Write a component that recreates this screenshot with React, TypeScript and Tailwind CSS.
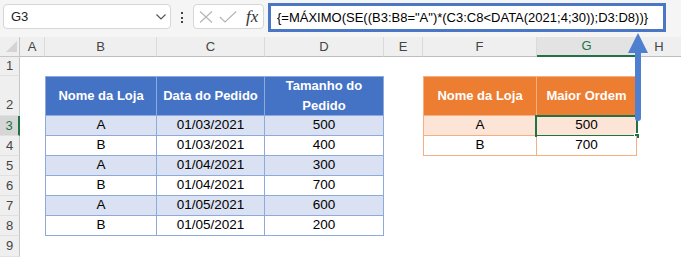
import React from "react";

const W = [20, 25, 112, 108, 119, 39, 114, 100, 44];
const colW = [
  "w-[20px]",
  "w-[25px]",
  "w-[112px]",
  "w-[108px]",
  "w-[119px]",
  "w-[39px]",
  "w-[114px]",
  "w-[100px]",
  "w-[44px]",
];
void W;

const letters = ["", "A", "B", "C", "D", "E", "F", "G", "H"];

const body = [
  { n: "3", b: "A", c: "01/03/2021", d: "500", f: "A", g: "500", shade: true },
  { n: "4", b: "B", c: "01/03/2021", d: "400", f: "B", g: "700", shade: false },
  { n: "5", b: "A", c: "01/04/2021", d: "300", shade: true },
  { n: "6", b: "B", c: "01/04/2021", d: "700", shade: false },
  { n: "7", b: "A", c: "01/05/2021", d: "600", shade: true },
  { n: "8", b: "B", c: "01/05/2021", d: "200", shade: false },
];

function RowHead({ n, sel, tall }: { n: string; sel?: boolean; tall?: boolean }) {
  return (
    <div
      className={`${colW[0]} shrink-0 flex justify-center ${tall ? "items-end pb-[1px]" : "items-center"} border-b border-[#e1e1e1] text-[13px] ${
        sel
          ? "bg-[#d6d6d6] text-[#217346] border-r-2 border-r-[#217346]"
          : "bg-[#efefef] text-[#444] border-r border-r-[#c6c6c6]"
      }`}
    >
      {n}
    </div>
  );
}

export default function App() {
  return (
    <div
      className="relative w-[681px] h-[257px] overflow-hidden bg-white text-black"
      style={{ fontFamily: '"Liberation Sans", Arial, sans-serif' }}
    >
      {/* Toolbar */}
      <div className="h-[37px] bg-[#f5f5f5] flex items-start pt-[3px]">
        <div className="ml-[3px] mt-[1px] w-[168px] h-[25px] bg-white border border-[#d6d6d6] rounded-[4px] flex items-center justify-between pl-[7px] pr-[3px] text-[13px] text-[#222]">
          <span>G3</span>
          <svg width="12" height="8" viewBox="0 0 12 8">
            <path d="M1.5 1.5 L6 6 L10.5 1.5" fill="none" stroke="#555" strokeWidth="1.2" />
          </svg>
        </div>
        <div className="w-[22px] h-[29px] flex flex-col items-center justify-center gap-[2.5px]">
          <span className="w-[2px] h-[2px] bg-[#444]" />
          <span className="w-[2px] h-[2px] bg-[#444]" />
          <span className="w-[2px] h-[2px] bg-[#444]" />
        </div>
        <div className="mt-[1px] w-[71px] h-[25px] bg-white border border-[#d6d6d6] rounded-[4px] flex items-center pl-[5px] gap-[6px]">
          <svg width="14" height="12" viewBox="0 0 14 12">
            <path d="M1 0.5 L13 11.5 M13 0.5 L1 11.5" stroke="#b4b4b4" strokeWidth="1.1" fill="none" />
          </svg>
          <svg width="18" height="12" viewBox="0 0 18 12">
            <path d="M0.8 6 L6 11 L17.2 0.5" stroke="#b4b4b4" strokeWidth="1.1" fill="none" />
          </svg>
          <span
            className="ml-[3px] text-[17px] italic text-[#333] leading-none"
            style={{ fontFamily: '"Liberation Serif", "Times New Roman", serif' }}
          >
            fx
          </span>
        </div>
        <div className="ml-[4px] w-[398px] h-[29px] bg-white border-[3px] border-[#4a76c6] flex items-center pl-[6px] text-[13px] text-black whitespace-nowrap">
          {'{=MÁXIMO(SE((B3:B8="A")*(C3:C8<DATA(2021;4;30));D3:D8))}'}
        </div>
      </div>

      {/* Column header row */}
      <div className="flex h-[20px]">
        <div className={`${colW[0]} shrink-0 bg-[#efefef] border-r border-b border-[#c6c6c6] relative`}>
          <svg className="absolute left-[6px] top-[4px]" width="11" height="11" viewBox="0 0 11 11">
            <path d="M11 0 L11 11 L0 11 Z" fill="#d4d4d4" />
          </svg>
        </div>
        {letters.slice(1).map((l, i) => {
          const sel = l === "G";
          return (
            <div
              key={l}
              className={`${colW[i + 1]} shrink-0 flex items-center justify-center text-[13px] border-r border-[#dadada] ${
                sel
                  ? "bg-[#e3e3e3] text-[#217346] border-b-2 border-b-[#217346]"
                  : "bg-[#efefef] text-[#444] border-b border-b-[#bdbdbd]"
              } ${l === "H" ? "border-r-0" : ""}`}
            >
              {l}
            </div>
          );
        })}
      </div>

      {/* Row 1 */}
      <div className="flex h-[19px]">
        <RowHead n="1" />
      </div>

      {/* Row 2 - headers */}
      <div className="flex h-[40px]">
        <RowHead n="2" tall />
        <div className={`${colW[1]} shrink-0`} />
        <div className={`${colW[2]} shrink-0 bg-[#4472c4] border border-[#8eaadb] flex items-center justify-center text-white font-bold text-[13px]`}>
          Nome da Loja
        </div>
        <div className={`${colW[3]} shrink-0 bg-[#4472c4] border-y border-r border-[#8eaadb] flex items-center justify-center text-white font-bold text-[13px]`}>
          Data do Pedido
        </div>
        <div className={`${colW[4]} shrink-0 bg-[#4472c4] border-y border-r border-[#8eaadb] flex items-center justify-center text-center text-white font-bold text-[13px] leading-[20px]`}>
          Tamanho do
          <br />
          Pedido
        </div>
        <div className={`${colW[5]} shrink-0`} />
        <div className={`${colW[6]} shrink-0 bg-[#ed7d31] border border-[#f4b084] flex items-center justify-center text-white font-bold text-[13px]`}>
          Nome da Loja
        </div>
        <div className={`${colW[7]} shrink-0 bg-[#ed7d31] border-y border-r border-[#f4b084] flex items-center justify-center text-white font-bold text-[13px]`}>
          Maior Ordem
        </div>
      </div>

      {/* Body rows */}
      {body.map((r) => {
        const blueBg = r.shade ? "bg-[#d9e1f2]" : "bg-white";
        const orBg = r.shade ? "bg-[#fce4d6]" : "bg-white";
        return (
          <div key={r.n} className="flex h-[20px]">
            <RowHead n={r.n} sel={r.n === "3"} />
            <div className={`${colW[1]} shrink-0`} />
            <div className={`${colW[2]} shrink-0 ${blueBg} border-l border-r border-b border-[#8eaadb] flex items-center justify-center text-[13.5px]`}>
              {r.b}
            </div>
            <div className={`${colW[3]} shrink-0 ${blueBg} border-r border-b border-[#8eaadb] flex items-center justify-center text-[13.5px]`}>
              {r.c}
            </div>
            <div className={`${colW[4]} shrink-0 ${blueBg} border-r border-b border-[#8eaadb] flex items-center justify-center text-[13.5px]`}>
              {r.d}
            </div>
            <div className={`${colW[5]} shrink-0`} />
            {r.f ? (
              <>
                <div className={`${colW[6]} shrink-0 ${orBg} border-l border-r border-b border-[#f4b084] flex items-center justify-center text-[13.5px]`}>
                  {r.f}
                </div>
                <div className={`${colW[7]} shrink-0 ${orBg} border-r border-b border-[#f4b084] flex items-center justify-center text-[13.5px] relative`}>
                  {r.g}
                  {r.n === "3" && (
                    <>
                      <div className="absolute left-[-2px] top-[-1px] right-[-2px] bottom-[-2px] border-2 border-[#217346]" />
                      <div className="absolute right-[-4px] bottom-[-4px] w-[6px] h-[6px] bg-[#217346] border border-white" />
                    </>
                  )}
                </div>
              </>
            ) : null}
          </div>
        );
      })}

      {/* Row 9 */}
      <div className="flex h-[21px]">
        <RowHead n="9" />
      </div>

      {/* Arrow overlay */}
      <svg className="absolute left-[626px] top-[32px]" width="24" height="92" viewBox="0 0 24 92">
        <path d="M12 1 L22 21 L15 21 L15 86 Q15 89 12 89 Q9 89 9 86 L9 21 L2 21 Z" fill="#4f7fcf" />
      </svg>
    </div>
  );
}
